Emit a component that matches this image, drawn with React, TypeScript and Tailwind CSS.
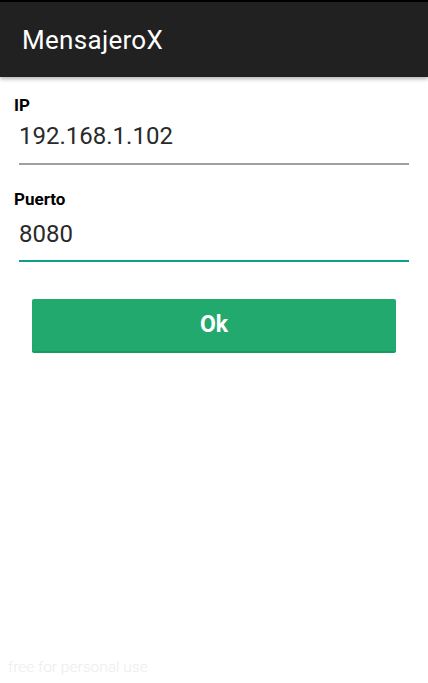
export default function App() {
  return (
    <div className="w-[428px] h-[683px] bg-white flex flex-col relative" style={{ fontFamily: "Roboto, 'Noto Sans', sans-serif" }}>
      <div className="h-[2px] bg-black" />
      <div className="h-[75px] bg-[#212121] flex items-center px-[22px] shadow-[0_2px_4px_rgba(0,0,0,0.3)] z-10">
        <h1 className="text-white text-[26px] leading-none tracking-[0.3px]">MensajeroX</h1>
      </div>

      <div className="flex flex-col px-[14px] pt-[20px]">
        <label className="text-[17px] font-bold text-black leading-none">IP</label>
        <div className="mx-[5px] mt-[10px] border-b-2 border-[#a0a0a0] pb-[15px]">
          <span className="text-[24px] text-[#2a2a2a] leading-none block">192.168.1.102</span>
        </div>

        <label className="text-[17px] font-bold text-black leading-none mt-[26px]">Puerto</label>
        <div className="mx-[5px] mt-[14px] border-b-2 border-[#0f9d8c] pb-[14px]">
          <span className="text-[24px] text-[#2a2a2a] leading-none block">8080</span>
        </div>

        <button className="mx-[18px] mt-[37px] h-[54px] bg-[#22a96d] border-b-2 border-[#1b9a60] rounded-[2px] text-white text-[23px] font-bold flex items-center justify-center">
          Ok
        </button>
      </div>

      <div className="absolute left-[8px] top-[656px] text-[15.5px] font-light text-[#ececec]">free for personal use</div>
    </div>
  );
}
